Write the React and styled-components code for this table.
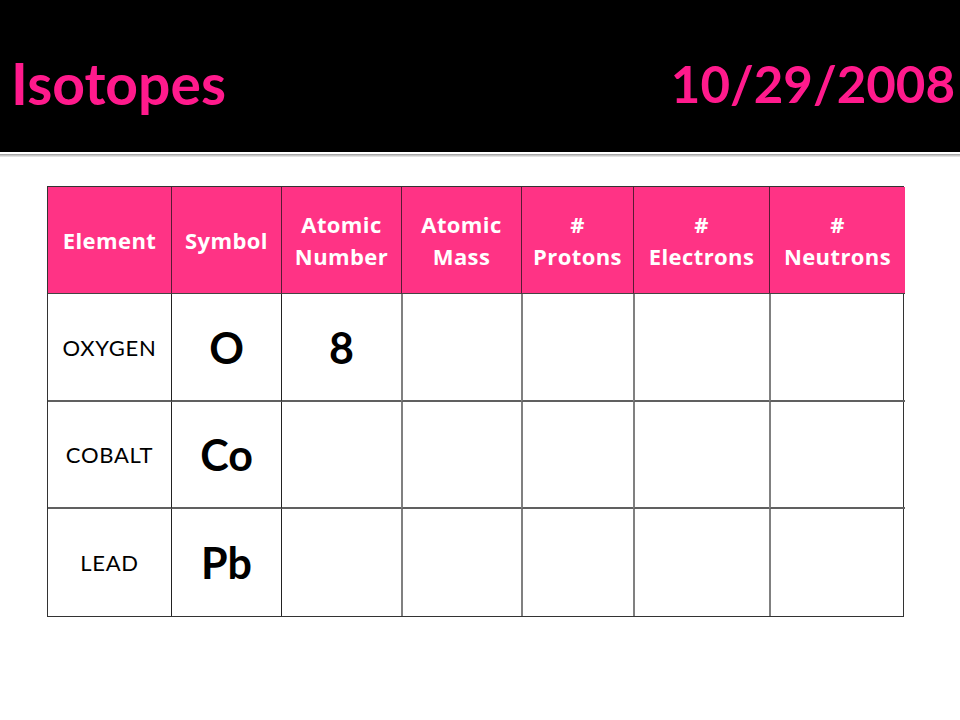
import React from "react";
import styled, { createGlobalStyle } from "styled-components";

const Global = createGlobalStyle`
  html, body { margin: 0; padding: 0; background: #fff; }
  body { font-family: Lato, "Open Sans", sans-serif; }
`;

const Page = styled.div`
  width: 960px;
  height: 720px;
  background: #fff;
  overflow: hidden;
`;

const TitleBar = styled.header`
  height: 152px;
  background: #000;
  display: flex;
  align-items: center;
  justify-content: space-between;
  padding: 0 5px 0 11px;
  box-sizing: border-box;
`;

const Title = styled.h1`
  margin: 0;
  margin-top: ${p => p.$mt || 0}px;
  color: #ff1a8c;
  font-family: Lato, sans-serif;
  font-weight: ${p => p.$weight || 700};
  font-size: ${p => p.$size}px;
  letter-spacing: ${p => p.$ls || 0}px;
  line-height: 1;
`;

const Rule = styled.div`
  margin-top: 2px;
  height: 3px;
  background: linear-gradient(#9a9a9a, #c8c8c8, #eee);
`;

const Table = styled.div`
  margin: 29px 0 0 47px;
  width: 857px;
  display: grid;
  grid-template-columns: 123px 110px 120px 120px 112px 136px 136px;
  grid-template-rows: 107px 108px 107px 107px;
  border: 1px solid #333;
  box-sizing: border-box;
`;

const HeadCell = styled.div`
  background: #ff3385;
  color: #fff;
  font-family: "Open Sans", Lato, sans-serif;
  font-weight: 700;
  font-size: 22px;
  letter-spacing: 0.4px;
  line-height: 32px;
  display: flex;
  align-items: center;
  justify-content: center;
  text-align: center;
  border-left: ${p => (p.$first ? "none" : "1.5px solid #5a1a34")};
  border-bottom: 1px solid #444;
`;

const Cell = styled.div`
  display: flex;
  align-items: center;
  justify-content: center;
  color: #000;
  border-left: ${p => (p.$first ? "none" : p.$dark ? "1.5px solid #222" : "2px solid #808080")};
  border-bottom: ${p => (p.$last ? "none" : "2px solid #606060")};
`;

const Name = styled.span`
  font-size: 22px;
  letter-spacing: 0.7px;
  font-weight: 400;
`;

const Symbol = styled.span`
  font-size: 43px;
  font-weight: 700;
`;

const headers = [
  ["Element"],
  ["Symbol"],
  ["Atomic", "Number"],
  ["Atomic", "Mass"],
  ["#", "Protons"],
  ["#", "Electrons"],
  ["#", "Neutrons"],
];

const rows = [
  { name: "OXYGEN", sym: "O", num: "8" },
  { name: "COBALT", sym: "Co", num: "" },
  { name: "LEAD", sym: "Pb", num: "" },
];

export default function App() {
  return (
    <Page>
      <Global />
      <TitleBar>
        <Title $size={57} $mt={15}>Isotopes</Title>
        <Title $size={51} $mt={15}>10/29/2008</Title>
      </TitleBar>
      <Rule />
      <Table>
        {headers.map((h, i) => (
          <HeadCell key={i} $first={i === 0}>
            <div>
              {h.map((line, j) => (
                <div key={j}>{line}</div>
              ))}
            </div>
          </HeadCell>
        ))}
        {rows.map((r, ri) => {
          const last = ri === rows.length - 1;
          return (
            <React.Fragment key={ri}>
              <Cell $first $last={last}>
                <Name>{r.name}</Name>
              </Cell>
              <Cell $dark $last={last}>
                <Symbol>{r.sym}</Symbol>
              </Cell>
              <Cell $dark $last={last}>
                <Symbol>{r.num}</Symbol>
              </Cell>
              <Cell $last={last} />
              <Cell $last={last} />
              <Cell $last={last} />
              <Cell $last={last} />
            </React.Fragment>
          );
        })}
      </Table>
    </Page>
  );
}
